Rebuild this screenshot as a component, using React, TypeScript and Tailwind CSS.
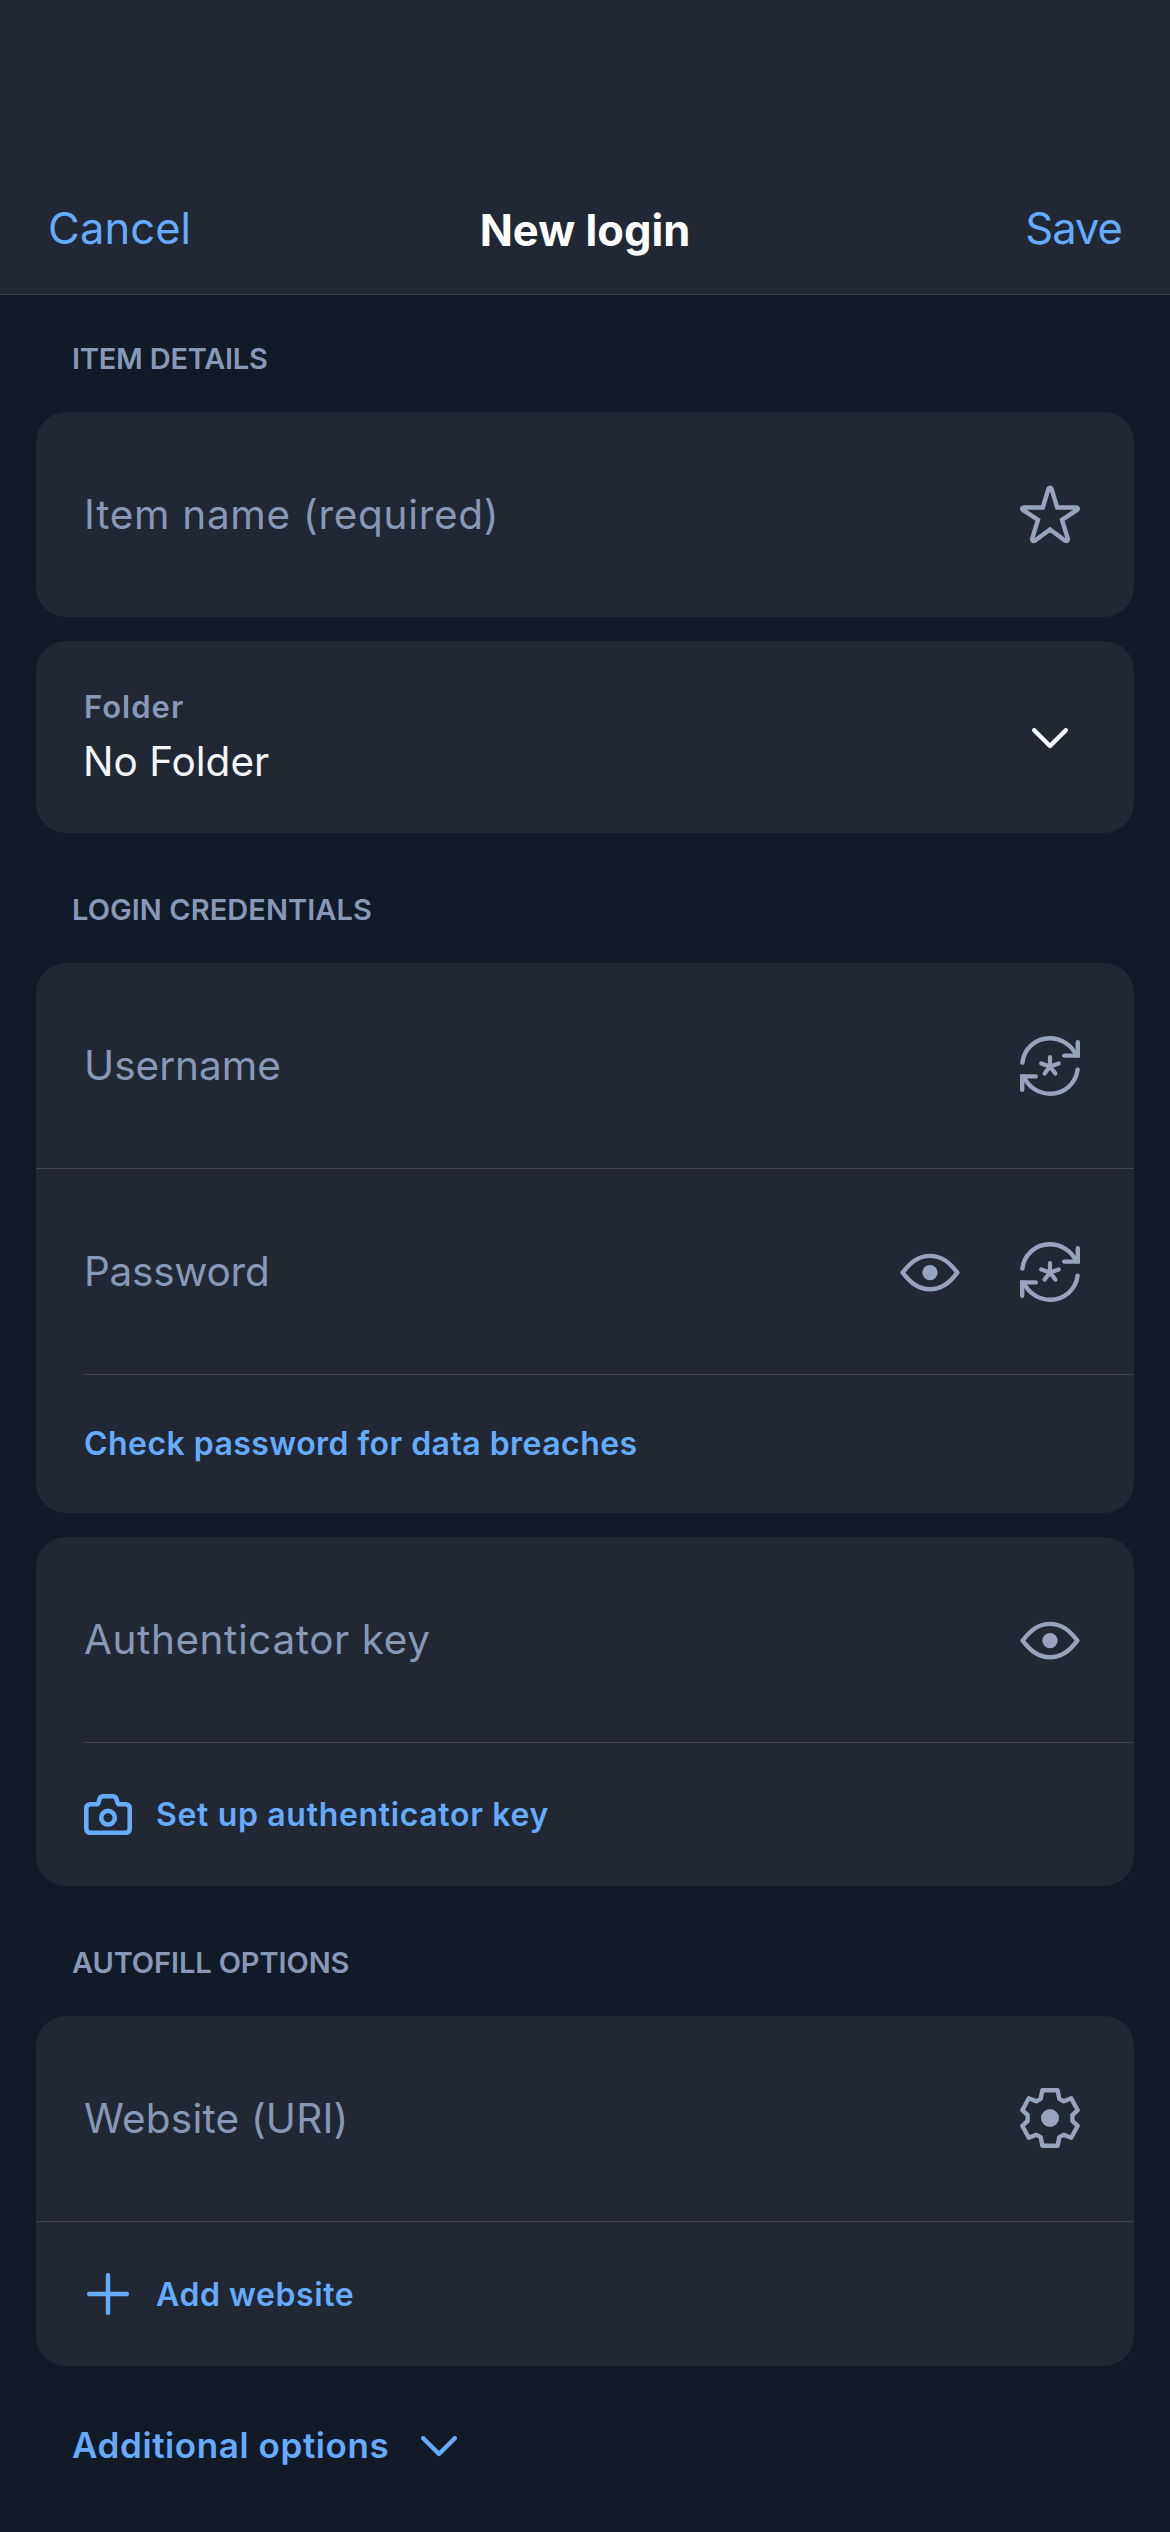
import type { ReactNode } from "react";

const muted = "text-[#8898b8]";

function Svg({ children, className, box = "0 0 60 60" }: { children: ReactNode; className: string; box?: string }) {
  return (
    <svg
      viewBox={box}
      className={"shrink-0 " + className}
      fill="none"
      stroke="currentColor"
      strokeWidth="4.4"
      strokeLinecap="round"
      strokeLinejoin="round"
    >
      {children}
    </svg>
  );
}

const iconSize = "h-[60px] w-[60px] text-[#98a4bf]";

function StarIcon() {
  return (
    <Svg className={iconSize}>
      <path d="M28.5 3.7Q30 1.6 31.5 3.7L37.2 22.5H56.3Q59 23.1 57 24.9L42 35L47.9 53.9Q48 56.6 45.3 55.7L30 44.4L14.7 55.7Q12 56.6 12.1 53.9L18 35L3 24.9Q1 23.1 3.7 22.5H22.8Z" strokeLinejoin="miter" />
    </Svg>
  );
}

function EyeIcon() {
  return (
    <Svg className={iconSize}>
      <path d="M2.6 30.6C11 19.9 18.5 13.9 30 13.9S49 19.9 57.4 30.6C49 41.3 41.5 47.3 30 47.3S11 41.3 2.6 30.6Z" />
      <circle cx="30" cy="30.6" r="7.7" fill="currentColor" stroke="none" />
    </Svg>
  );
}

function GenerateIcon() {
  return (
    <Svg className={iconSize}>
      <path d="M2.4 26.6C4 12.5 15.8 2.2 29.6 2.2C41.6 2.2 51.6 9.2 56.4 19.4" />
      <path d="M57.8 6.2V19.6H44.2" strokeLinejoin="miter" />
      <path d="M57.6 33.6C56 47.5 44.2 57.8 30.4 57.8C18.4 57.8 8.4 50.8 3.6 40.6" />
      <path d="M2.2 53.8V40.4H15.8" strokeLinejoin="miter" />
      <path d="M30 30.4V21.2M30 30.4L38.7 27.4M30 30.4L35.4 37.6M30 30.4L24.6 37.6M30 30.4L21.3 27.4" strokeWidth="4.2" />
    </Svg>
  );
}

function GearIcon() {
  return (
    <Svg className={iconSize + " -mt-px"}>
      <path d="M22.4 2.2H37.6L39.3 10.8L43.8 13.3L51.2 10.2L57.7 22.2L52.4 27V33L57.7 37.8L51.2 49.8L43.8 46.7L39.3 49.2L37.6 57.8H22.4L20.7 49.2L16.2 46.7L8.8 49.8L2.3 37.8L7.6 33V27L2.3 22.2L8.8 10.2L16.2 13.3L20.7 10.8Z" />
      <circle cx="30" cy="30" r="9" fill="currentColor" stroke="none" />
    </Svg>
  );
}

function ChevronIcon({ className }: { className: string }) {
  return (
    <Svg box="0 0 36 21" className={"h-[21px] w-[36px] " + className}>
      <path d="M2.2 2.2L18 18L33.8 2.2" />
    </Svg>
  );
}

function CameraIcon() {
  return (
    <Svg box="0 0 48 41" className="h-[41px] w-[48px]">
      <path d="M2.3 14.5Q2.3 10.3 6.5 10.3H12.4Q14 10.3 14.5 8.6L15.5 5.2Q16.4 2.3 19.4 2.3H28.6Q31.6 2.3 32.5 5.2L33.5 8.6Q34 10.3 35.6 10.3H41.5Q45.7 10.3 45.7 14.5V34.8Q45.7 38.8 41.5 38.8H6.5Q2.3 38.8 2.3 34.8Z" strokeWidth="4.6" />
      <circle cx="24" cy="23.7" r="6.8" strokeWidth="4.6" />
    </Svg>
  );
}

function PlusIcon() {
  return (
    <Svg box="0 0 48 48" className="h-[48px] w-[48px]">
      <path d="M24 5.2V42.8M5.2 24H42.8" />
    </Svg>
  );
}

function SectionTitle({ children, className }: { children: ReactNode; className: string }) {
  return (
    <h2 className={"flex items-end pl-[36px] pb-[36px] text-[29px] leading-[35px] font-semibold " + muted + " " + className}>
      {children}
    </h2>
  );
}

function Card({ children, className = "" }: { children: ReactNode; className?: string }) {
  return <section className={"overflow-hidden rounded-[30px] bg-[#212733] " + className}>{children}</section>;
}

function Field({ label, tracking, children }: { label: string; tracking: string; children: ReactNode }) {
  return (
    <div className="flex h-[205px] items-center justify-between pr-[54px] pl-[48px]">
      <span className={"text-[40.5px] leading-[50px] whitespace-nowrap " + muted + " " + tracking}>{label}</span>
      <div className="flex gap-[60px]">{children}</div>
    </div>
  );
}

function Divider({ inset = false }: { inset?: boolean }) {
  return <div className={"h-px bg-[#40454f] " + (inset ? "ml-12" : "")} />;
}

export default function App() {
  return (
    <div className="min-h-[2532px] w-[1170px] overflow-hidden bg-[#121a27] font-['Inter',sans-serif] text-[#65abff]">
      <header className="grid h-[295px] grid-cols-3 items-end border-b border-[#333b49] bg-[#212733] px-12 pb-[37px] text-[43.5px] leading-[54px]">
        <button className="justify-self-start pb-[2px] tracking-[0.1px]">Cancel</button>
        <h1 className="justify-self-center text-[43.5px] font-bold text-white">New login</h1>
        <button className="justify-self-end pb-[2px] tracking-[-1px]">Save</button>
      </header>

      <main className="px-9">
        <SectionTitle className="h-[117px] tracking-[-0.22px]">ITEM DETAILS</SectionTitle>
        <Card>
          <Field label="Item name (required)" tracking="tracking-[0.7px]">
            <StarIcon />
          </Field>
        </Card>
        <Card className="mt-6 flex h-[192px] items-center justify-between pr-[66px] pl-[47px]">
          <div className="flex flex-col pb-[2px]">
            <span className={"pl-px text-[31px] leading-[44px] font-semibold tracking-[1px] " + muted}>Folder</span>
            <span className="mt-[8px] text-[40.5px] leading-[50px] text-[#f3f6f9]">No Folder</span>
          </div>
          <ChevronIcon className="mt-[2px] text-[#f3f6f9]" />
        </Card>

        <SectionTitle className="h-[130px] tracking-[0.06px]">LOGIN CREDENTIALS</SectionTitle>
        <Card>
          <Field label="Username" tracking="tracking-[0]">
            <GenerateIcon />
          </Field>
          <Divider />
          <Field label="Password" tracking="tracking-[-0.25px]">
            <EyeIcon />
            <GenerateIcon />
          </Field>
          <Divider inset />
          <button className="flex h-[138px] w-full items-center pb-px pl-12 text-[32px] leading-[40px] font-semibold tracking-[0.45px]">
            Check password for data breaches
          </button>
        </Card>
        <Card className="mt-6">
          <Field label="Authenticator key" tracking="tracking-[0.58px]">
            <EyeIcon />
          </Field>
          <Divider inset />
          <button className="flex h-[143px] w-full items-center gap-6 pl-12 text-[32px] leading-[40px] font-semibold tracking-[0.66px]">
            <CameraIcon />
            Set up authenticator key
          </button>
        </Card>

        <SectionTitle className="h-[130px] tracking-[-0.1px]">AUTOFILL OPTIONS</SectionTitle>
        <Card>
          <Field label="Website (URI)" tracking="tracking-[0.2px]">
            <GearIcon />
          </Field>
          <Divider />
          <button className="flex h-[144px] w-full items-center gap-6 pl-12 text-[32px] leading-[40px] font-semibold tracking-[0.58px]">
            <PlusIcon />
            <span className="pt-px">Add website</span>
          </button>
        </Card>
        <button className="mt-[57px] ml-[36px] flex items-center gap-[32px] text-[35px] leading-[44px] font-semibold tracking-[0.59px]">
          Additional options
          <ChevronIcon className="mt-[2px]" />
        </button>
      </main>
    </div>
  );
}
